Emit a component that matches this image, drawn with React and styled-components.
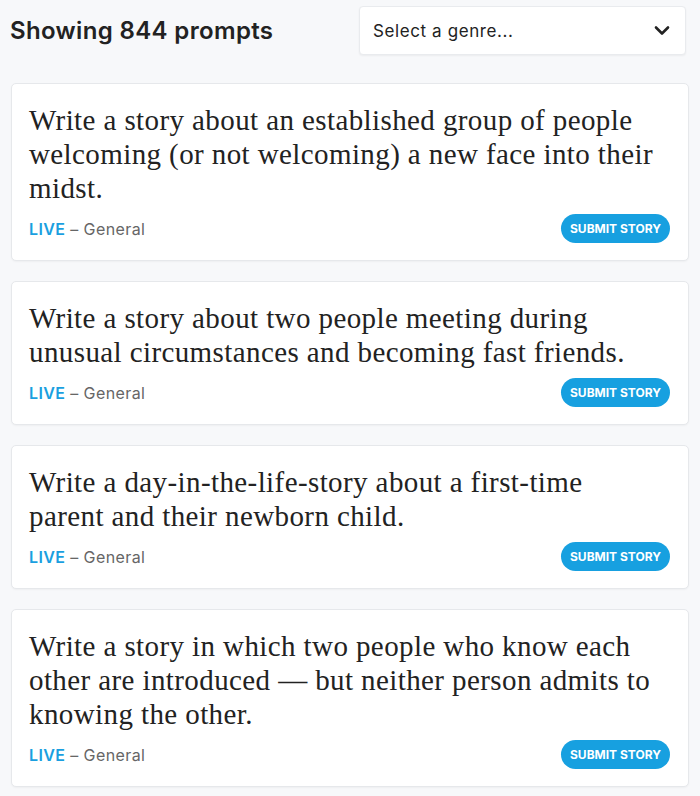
import React from "react";
import styled, { createGlobalStyle } from "styled-components";

const Global = createGlobalStyle`
  html, body { margin: 0; padding: 0; background: #f7f8fa; }
  body { font-family: Inter, "Open Sans", sans-serif; }
`;

const Page = styled.div`
  padding: 6px 11px 20px 10px;
  display: flex;
  flex-direction: column;
`;

const Header = styled.div`
  display: flex;
  align-items: center;
  justify-content: space-between;
  margin-bottom: 28px;
`;

const Title = styled.h1`
  margin: 0;
  font-family: Inter, sans-serif;
  font-weight: 600;
  font-size: 24px;
  color: #222;
  letter-spacing: 0.35px;
`;

const Select = styled.div`
  width: 327px;
  height: 49px;
  box-sizing: border-box;
  background: #fff;
  border: 1px solid #e9ebee;
  border-radius: 4px;
  box-shadow: 0 1px 2px rgba(0,0,0,0.05);
  display: flex;
  align-items: center;
  justify-content: space-between;
  padding: 0 15px 0 13px;
  margin-right: 3px;
  font-family: Inter, sans-serif;
  font-size: 17px;
  letter-spacing: 0.6px;
  color: #222;
`;

const List = styled.div`
  display: flex;
  flex-direction: column;
  gap: 20px;
  padding-left: 1px;
`;

const Card = styled.div`
  background: #fff;
  border: 1px solid #e6e8eb;
  border-radius: 5px;
  box-shadow: 0 1px 2px rgba(0,0,0,0.04);
  padding: 19px 18px 17px 17px;
`;

const Prompt = styled.p`
  margin: 0;
  padding-right: 10px;
  font-family: "Liberation Serif", serif;
  font-size: 29px;
  letter-spacing: 0.4px;
  line-height: 34px;
  color: #222;
`;

const Footer = styled.div`
  margin-top: 9px;
  display: flex;
  align-items: center;
  justify-content: space-between;
`;

const Meta = styled.div`
  font-family: Inter, sans-serif;
  font-size: 16px;
  letter-spacing: 0.4px;
  color: #666;
`;

const Live = styled.span`
  color: #1a9fe0;
  font-weight: 600;
`;

const Button = styled.button`
  height: 29px;
  padding: 0 9px;
  border: none;
  border-radius: 15px;
  background: #17a0e0;
  color: #fff;
  font-family: Inter, sans-serif;
  font-weight: 700;
  font-size: 12px;
  letter-spacing: 0;
`;

const prompts = [
  "Write a story about an established group of people welcoming (or not welcoming) a new face into their midst.",
  "Write a story about two people meeting during unusual circumstances and becoming fast friends.",
  "Write a day-in-the-life-story about a first-time parent and their newborn child.",
  "Write a story in which two people who know each other are introduced — but neither person admits to knowing the other.",
];

export default function App() {
  return (
    <>
      <Global />
      <Page>
        <Header>
          <Title>Showing 844 prompts</Title>
          <Select>
            <span>Select a genre...</span>
            <svg width="16" height="11" viewBox="0 0 16 11" fill="none">
              <path d="M2 2.5 L8 8.5 L14 2.5" stroke="#222" strokeWidth="2.6" strokeLinecap="round" strokeLinejoin="round" />
            </svg>
          </Select>
        </Header>
        <List>
          {prompts.map((p, i) => (
            <Card key={i}>
              <Prompt>{p}</Prompt>
              <Footer>
                <Meta><Live>LIVE</Live> – General</Meta>
                <Button>SUBMIT STORY</Button>
              </Footer>
            </Card>
          ))}
        </List>
      </Page>
    </>
  );
}
